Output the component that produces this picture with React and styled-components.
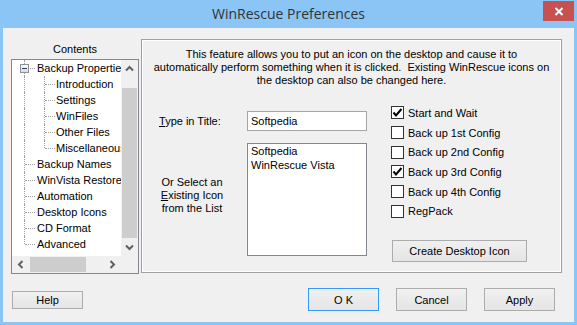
import React from "react";
import styled, { createGlobalStyle } from "styled-components";

const GlobalStyle = createGlobalStyle`
  html, body {
    margin: 0;
    padding: 0;
    background: #8ac5f6;
  }
  body {
    font-family: "Liberation Sans", Arial, sans-serif;
    font-size: 11px;
    color: #000;
  }
`;

const tree = [
  { label: "Backup Properties", level: 0, v: "full", open: true },
  { label: "Introduction", level: 1, v: "full" },
  { label: "Settings", level: 1, v: "full" },
  { label: "WinFiles", level: 1, v: "full" },
  { label: "Other Files", level: 1, v: "full" },
  { label: "Miscellaneous", level: 1, v: "top" },
  { label: "Backup Names", level: 0, v: "full" },
  { label: "WinVista Restore", level: 0, v: "full" },
  { label: "Automation", level: 0, v: "full" },
  { label: "Desktop Icons", level: 0, v: "full" },
  { label: "CD Format", level: 0, v: "full" },
  { label: "Advanced", level: 0, v: "top" },
];

const options = [
  { label: "Start and Wait", checked: true },
  { label: "Back up 1st Config" },
  { label: "Back up 2nd Config" },
  { label: "Back up 3rd Config", checked: true },
  { label: "Back up 4th Config" },
  { label: "RegPack" },
];

const Chevron = ({ dir }) => {
  const rot = { up: 0, down: 180, left: -90, right: 90 }[dir];
  return (
    <svg width="9" height="9" viewBox="0 0 9 9" style={{ transform: `rotate(${rot}deg)` }}>
      <polyline points="1,6.5 4.5,3 8,6.5" fill="none" stroke="#606060" strokeWidth="2" />
    </svg>
  );
};

const App = () => {
  return (
    <Frame>
      <GlobalStyle />
      <TitleBar>
        <span />
        <TitleText>WinRescue Preferences</TitleText>
        <CloseBtn>
          <svg width="10" height="9" viewBox="0 0 10 9">
            <path d="M1.5 1 L8.5 8 M8.5 1 L1.5 8" stroke="#fff" strokeWidth="2" />
          </svg>
        </CloseBtn>
      </TitleBar>

      <Client>
        <MainRow>
          <LeftCol>
            <Caption>Contents</Caption>
            <TreeBox>
              <TreeView>
                {tree.map((item) => (
                  <TreeRow key={item.label}>
                    {item.level === 1 && <Branch $w={20} $v="full" />}
                    <Branch $w={item.level === 0 ? 25 : 24} $v={item.v} $h>
                      {item.open && <Expander />}
                    </Branch>
                    <TreeLabel>{item.label}</TreeLabel>
                  </TreeRow>
                ))}
              </TreeView>
              <VBar>
                <ArrowBtn><Chevron dir="up" /></ArrowBtn>
                <Track $vertical>
                  <Thumb $vertical />
                </Track>
                <ArrowBtn><Chevron dir="down" /></ArrowBtn>
              </VBar>
              <HBar>
                <ArrowBtn><Chevron dir="left" /></ArrowBtn>
                <Track>
                  <Thumb />
                </Track>
                <ArrowBtn><Chevron dir="right" /></ArrowBtn>
              </HBar>
              <Corner />
            </TreeBox>
          </LeftCol>

          <Panel>
            <Desc>
              <span>This feature allows you to put an icon on the desktop and cause it to</span>
              <span>automatically perform something when it is clicked.  Existing WinRescue icons on</span>
              <span>the desktop can also be changed here.</span>
            </Desc>
            <Body>
              <LeftSection>
                <FieldRow>
                  <FieldLabel><u>T</u>ype in Title:</FieldLabel>
                  <TextInput defaultValue="Softpedia" />
                </FieldRow>
                <SelectRow>
                  <SelectLabel>
                    Or Select an
                    <br />
                    <u>E</u>xisting Icon
                    <br />
                    from the List
                  </SelectLabel>
                  <ListBox>
                    <ListItem>Softpedia</ListItem>
                    <ListItem>WinRescue Vista</ListItem>
                  </ListBox>
                </SelectRow>
              </LeftSection>

              <RightSection>
                {options.map((o) => (
                  <CheckRow key={o.label}>
                    <CheckBox>
                      {o.checked && (
                        <svg width="11" height="11" viewBox="0 0 11 11">
                          <polyline points="1.5,5.5 4,8.5 9.5,2" fill="none" stroke="#000" strokeWidth="2" />
                        </svg>
                      )}
                    </CheckBox>
                    {o.label}
                  </CheckRow>
                ))}
                <CreateButton>Create Desktop Icon</CreateButton>
              </RightSection>
            </Body>
          </Panel>
        </MainRow>

        <ButtonRow>
          <DlgButton $small>Help</DlgButton>
          <ButtonGroup>
            <DlgButton $focus>O K</DlgButton>
            <DlgButton>Cancel</DlgButton>
            <DlgButton>Apply</DlgButton>
          </ButtonGroup>
        </ButtonRow>
      </Client>
    </Frame>
  );
};

const Frame = styled.div`
  width: 577px;
  height: 325px;
  box-sizing: border-box;
  background: #8ac5f6;
  display: flex;
  flex-direction: column;
  padding: 0 3px 3px;
`;

const TitleBar = styled.div`
  height: 28px;
  flex: none;
  margin: 0 -3px;
  display: grid;
  grid-template-columns: 1fr auto 1fr;
`;

const TitleText = styled.div`
  font-family: "Open Sans", "Noto Sans", sans-serif;
  font-size: 14px;
  line-height: 28px;
  color: #333;
`;

const CloseBtn = styled.div`
  justify-self: end;
  width: 31px;
  height: 20px;
  margin: 1px 3px 0 0;
  background: #c75050;
  display: flex;
  align-items: center;
  justify-content: center;
`;

const Client = styled.div`
  flex: 1;
  background: #f0f0f0;
  display: flex;
  flex-direction: column;
  padding-top: 11px;
`;

const MainRow = styled.div`
  display: flex;
  align-items: flex-start;
  padding-left: 8px;
  height: 235px;
`;

const LeftCol = styled.div`
  width: 128px;
  display: flex;
  flex-direction: column;
`;

const Caption = styled.div`
  height: 20px;
  line-height: 20px;
  text-align: center;
`;

const TreeBox = styled.div`
  height: 215px;
  box-sizing: border-box;
  border: 1px solid #828790;
  background: #fff;
  display: grid;
  grid-template-columns: 109px 17px;
  grid-template-rows: 196px 17px;
`;

const TreeView = styled.div`
  overflow: hidden;
`;

const TreeRow = styled.div`
  display: flex;
  height: 16px;
  align-items: center;
  white-space: nowrap;
`;

const Branch = styled.span`
  position: relative;
  flex: none;
  align-self: stretch;
  width: ${(p) => p.$w}px;
  &::before {
    content: "";
    position: absolute;
    left: 12px;
    top: 0;
    height: ${(p) => (p.$v === "top" ? "8px" : "16px")};
    border-left: 1px dotted #a0a0a0;
  }
  &::after {
    content: "";
    position: absolute;
    left: 13px;
    top: 8px;
    width: ${(p) => (p.$h ? 10 : 0)}px;
    border-top: 1px dotted #a0a0a0;
  }
`;

const Expander = styled.span`
  position: absolute;
  z-index: 1;
  left: 8px;
  top: 4px;
  width: 9px;
  height: 9px;
  box-sizing: border-box;
  border: 1px solid #919191;
  background: linear-gradient(#ffffff, #dcdcdc);
  &::after {
    content: "";
    position: absolute;
    left: 1px;
    top: 3px;
    width: 5px;
    height: 1px;
    background: #1c3c6a;
  }
`;

const TreeLabel = styled.span`
  line-height: 16px;
`;

const VBar = styled.div`
  background: #f0f0f0;
  display: flex;
  flex-direction: column;
`;

const HBar = styled.div`
  background: #f0f0f0;
  display: flex;
`;

const Corner = styled.div`
  background: #f0f0f0;
`;

const ArrowBtn = styled.div`
  flex: none;
  width: 17px;
  height: 17px;
  display: flex;
  align-items: center;
  justify-content: center;
`;

const Track = styled.div`
  flex: 1;
  display: flex;
  flex-direction: ${(p) => (p.$vertical ? "column" : "row")};
`;

const Thumb = styled.div`
  background: #cdcdcd;
  ${(p) =>
    p.$vertical
      ? "margin: 11px 1px 0; height: 150px;"
      : "margin: 1px 0 1px 1px; width: 56px;"}
`;

const Panel = styled.div`
  margin-left: 2px;
  width: 421px;
  height: 234px;
  box-sizing: border-box;
  border: 1px solid #a0a0a0;
  box-shadow: inset 1px 1px 0 #fff, inset -1px -1px 0 #fff;
  display: flex;
  flex-direction: column;
`;

const Desc = styled.div`
  padding-top: 8px;
  text-align: center;
  line-height: 13px;
  display: flex;
  flex-direction: column;
  white-space: pre;
`;

const Body = styled.div`
  display: flex;
  padding-left: 17px;
`;

const LeftSection = styled.div`
  margin-top: 24px;
  display: flex;
  flex-direction: column;
`;

const FieldRow = styled.div`
  display: flex;
  align-items: center;
  height: 20px;
`;

const FieldLabel = styled.div`
  width: 88px;
`;

const TextInput = styled.input`
  width: 120px;
  height: 20px;
  box-sizing: border-box;
  border: 1px solid #a5a5a5;
  padding: 0 0 0 3px;
  margin: 0;
  font-family: "Liberation Sans", Arial, sans-serif;
  font-size: 11px;
  color: #000;
  background: #fff;
  outline: none;
`;

const SelectRow = styled.div`
  display: flex;
  margin-top: 12px;
`;

const SelectLabel = styled.div`
  width: 66px;
  margin: 33px 22px 0 0;
  text-align: center;
  line-height: 13px;
`;

const ListBox = styled.div`
  width: 120px;
  height: 113px;
  box-sizing: border-box;
  border: 1px solid #828790;
  background: #fff;
  padding: 0 3px;
`;

const ListItem = styled.div`
  line-height: 14px;
`;

const RightSection = styled.div`
  margin: 16px 0 0 24px;
  display: flex;
  flex-direction: column;
`;

const CheckRow = styled.div`
  height: 19.7px;
  display: flex;
  align-items: center;
  gap: 4px;
  white-space: nowrap;
`;

const CheckBox = styled.span`
  width: 13px;
  height: 13px;
  box-sizing: border-box;
  border: 1px solid #333;
  background: #fff;
  display: flex;
  align-items: center;
  justify-content: center;
`;

const CreateButton = styled.div`
  margin: 18.5px 0 0 1px;
  width: 135px;
  height: 22px;
  box-sizing: border-box;
  border: 1px solid #acacac;
  background: linear-gradient(#f0f0f0, #e5e5e5);
  display: flex;
  align-items: center;
  justify-content: center;
`;

const ButtonRow = styled.div`
  margin-top: 14px;
  height: 23px;
  display: flex;
  align-items: center;
  justify-content: space-between;
  padding: 0 19px 0 9px;
`;

const ButtonGroup = styled.div`
  display: flex;
  gap: 17px;
`;

const DlgButton = styled.div`
  width: 71px;
  height: ${(p) => (p.$small ? 18 : 23)}px;
  box-sizing: border-box;
  border: 1px solid ${(p) => (p.$focus ? "#3399ff" : "#acacac")};
  background: linear-gradient(#f0f0f0, #e5e5e5);
  display: flex;
  align-items: center;
  justify-content: center;
`;

export default App;
